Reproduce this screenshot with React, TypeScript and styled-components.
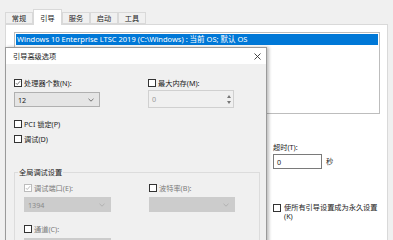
import React from 'react';
import styled, { createGlobalStyle } from 'styled-components';

const GlobalStyle = createGlobalStyle`
  body {
    margin: 0;
    background: #f0f0f0;
    font-family: "Noto Sans", "Noto Sans CJK SC", sans-serif;
    color: #1a1a1a;
  }
`;

type BoxProps = { $checked?: boolean; $disabled?: boolean };

const CheckBox: React.FC<BoxProps> = ({ $checked, $disabled }) => (
  <Box $disabled={$disabled}>
    {$checked && (
      <svg width="8" height="8" viewBox="0 0 8 8">
        <polyline points="1.2,4.2 3,6 6.8,1.6" fill="none" stroke={$disabled ? '#9a9a9a' : '#333'} strokeWidth="0.9" />
      </svg>
    )}
  </Box>
);

const Chevron: React.FC<{ $disabled?: boolean }> = ({ $disabled }) => (
  <svg width="6" height="4" viewBox="0 0 6 4">
    <polyline points="0.5,0.8 3,3.2 5.5,0.8" fill="none" stroke={$disabled ? '#aaa' : '#555'} strokeWidth="0.8" />
  </svg>
);

export default function App() {
  return (
    <>
      <GlobalStyle />
      <Window>
        <TabStrip>
          <Tab>常规</Tab>
          <Tab $active>引导</Tab>
          <Tab>服务</Tab>
          <Tab>启动</Tab>
          <Tab>工具</Tab>
        </TabStrip>
        <Panel>
          <ListBox>
            <SelectedRow>Windows 10 Enterprise LTSC 2019 (C:\Windows) : 当前 OS; 默认 OS</SelectedRow>
          </ListBox>
          <RightArea>
            <Label>超时(T):</Label>
            <TimeoutRow>
              <TextInput>0</TextInput>
              <Label>秒</Label>
            </TimeoutRow>
            <PermanentRow>
              <CheckBox />
              <WrapLabel>使所有引导设置成为永久设置<br />(K)</WrapLabel>
            </PermanentRow>
          </RightArea>
        </Panel>

        <Dialog>
          <TitleBar>
            <Title>引导高级选项</Title>
            <svg width="7" height="7" viewBox="0 0 7 7">
              <path d="M0.5 0.5 L6.5 6.5 M6.5 0.5 L0.5 6.5" stroke="#333" strokeWidth="0.9" />
            </svg>
          </TitleBar>
          <DialogBody>
            <TwoCols>
              <Field>
                <CheckRow>
                  <CheckBox $checked />
                  <Label>处理器个数(N):</Label>
                </CheckRow>
                <Select>
                  <span>12</span>
                  <Chevron />
                </Select>
              </Field>
              <Field>
                <CheckRow>
                  <CheckBox />
                  <Label>最大内存(M):</Label>
                </CheckRow>
                <Spin>
                  <span>0</span>
                  <SpinArrows>
                    <svg width="4" height="3" viewBox="0 0 4 3"><polygon points="0,3 2,0 4,3" fill="#777" /></svg>
                    <svg width="4" height="3" viewBox="0 0 4 3"><polygon points="0,0 2,3 4,0" fill="#777" /></svg>
                  </SpinArrows>
                </Spin>
              </Field>
            </TwoCols>
            <Options>
              <CheckRow>
                <CheckBox />
                <Label>PCI 锁定(P)</Label>
              </CheckRow>
              <CheckRow>
                <CheckBox />
                <Label>调试(D)</Label>
              </CheckRow>
            </Options>
            <GroupBox>
              <Legend>全局调试设置</Legend>
              <GroupCols>
                <Field>
                  <CheckRow>
                    <CheckBox $checked $disabled />
                    <Label $disabled>调试端口(E):</Label>
                  </CheckRow>
                  <Select $disabled $width={87}>
                    <span>1394</span>
                    <Chevron $disabled />
                  </Select>
                </Field>
                <Field>
                  <CheckRow>
                    <CheckBox />
                    <Label $disabled>波特率(B):</Label>
                  </CheckRow>
                  <Select $disabled>
                    <span />
                    <Chevron $disabled />
                  </Select>
                </Field>
              </GroupCols>
              <ChannelField>
                <CheckRow>
                  <CheckBox />
                  <Label $disabled>通道(C):</Label>
                </CheckRow>
                <Select $disabled $width={87}>
                  <span />
                </Select>
              </ChannelField>
            </GroupBox>
          </DialogBody>
        </Dialog>
      </Window>
    </>
  );
}

const Window = styled.div`
  position: relative;
  width: 393px;
  height: 240px;
  overflow: hidden;
  padding-top: 9px;
  box-sizing: border-box;
`;

const TabStrip = styled.div`
  display: flex;
  align-items: flex-end;
  padding-left: 5px;
  height: 15px;
  position: relative;
  z-index: 1;
`;

const Tab = styled.div<{ $active?: boolean }>`
  box-sizing: border-box;
  height: ${p => (p.$active ? '16px' : '12px')};
  width: ${p => (p.$active ? '29px' : '28px')};
  margin-bottom: ${p => (p.$active ? '-1px' : '0')};
  background: ${p => (p.$active ? '#fff' : '#f0f0f0')};
  border: 1px solid #d9d9d9;
  border-bottom: ${p => (p.$active ? 'none' : '1px solid #d9d9d9')};
  font-size: 7.2px;
  display: flex;
  align-items: center;
  justify-content: center;
  color: #222;
`;

const Panel = styled.div`
  margin-left: 5px;
  width: 383px;
  height: 230px;
  box-sizing: border-box;
  background: #fff;
  border: 1px solid #d9d9d9;
  padding: 7px 0 0 8px;
`;

const ListBox = styled.div`
  width: 366px;
  height: 82px;
  box-sizing: border-box;
  border: 1px solid #bdbdbd;
  padding: 1px;
`;

const SelectedRow = styled.div`
  height: 11px;
  background: #0078d7;
  color: #fff;
  font-size: 7.5px;
  line-height: 11px;
  padding-left: 1px;
  white-space: nowrap;
`;

const RightArea = styled.div`
  margin: 29px 0 0 259px;
  display: flex;
  flex-direction: column;
`;

const Label = styled.span<{ $disabled?: boolean }>`
  font-size: 7.2px;
  line-height: 9px;
  white-space: nowrap;
  color: ${p => (p.$disabled ? '#7a7a7a' : '#1a1a1a')};
`;

const TimeoutRow = styled.div`
  display: flex;
  align-items: center;
  gap: 4px;
  margin-top: 2px;
`;

const TextInput = styled.div`
  width: 49px;
  height: 15px;
  box-sizing: border-box;
  border: 1px solid #7a7a7a;
  background: #fff;
  font-size: 7.2px;
  padding-left: 3px;
  display: flex;
  align-items: center;
`;

const PermanentRow = styled.div`
  display: flex;
  align-items: flex-start;
  gap: 3px;
  margin-top: 35px;
`;

const WrapLabel = styled(Label)`
  margin-top: -1px;
`;

const Box = styled.div<{ $disabled?: boolean }>`
  width: 8px;
  height: 8px;
  box-sizing: border-box;
  border: 1px solid ${p => (p.$disabled ? '#bcbcbc' : '#333')};
  background: #fff;
  flex-shrink: 0;
  display: flex;
  align-items: center;
  justify-content: center;
  svg { display: block; }
`;

const Dialog = styled.div`
  position: absolute;
  left: 5px;
  top: 47px;
  width: 262px;
  height: 210px;
  box-sizing: border-box;
  border: 1px solid #9a9a9a;
  box-shadow: 2px 0 3px rgba(0, 0, 0, 0.25);
  background: #f0f0f0;
  display: flex;
  flex-direction: column;
`;

const TitleBar = styled.div`
  height: 16px;
  background: #fff;
  display: flex;
  align-items: center;
  justify-content: space-between;
  padding: 0 5px 0 7px;
  flex-shrink: 0;
`;

const Title = styled.span`
  font-size: 7.2px;
  color: #222;
`;

const DialogBody = styled.div`
  padding: 15px 0 0 8px;
  display: flex;
  flex-direction: column;
`;

const TwoCols = styled.div`
  display: grid;
  grid-template-columns: 134px 86px;
`;

const Field = styled.div`
  display: flex;
  flex-direction: column;
  gap: 5px;
`;

const CheckRow = styled.div`
  display: flex;
  align-items: center;
  gap: 2px;
  height: 8px;
`;

const Select = styled.div<{ $disabled?: boolean; $width?: number }>`
  width: ${p => p.$width ?? 86}px;
  height: 15px;
  box-sizing: border-box;
  border: 1px solid ${p => (p.$disabled ? '#cccccc' : '#b0b0b0')};
  background: ${p => (p.$disabled ? '#cccccc' : '#e5e5e5')};
  color: ${p => (p.$disabled ? '#8a8a8a' : '#1a1a1a')};
  font-size: 7.2px;
  display: flex;
  align-items: center;
  justify-content: space-between;
  padding: 0 5px 0 3px;
`;

const Spin = styled.div`
  width: 86px;
  height: 18px;
  margin-top: -2px;
  box-sizing: border-box;
  border: 1px solid #d0d0d0;
  background: #f0f0f0;
  color: #9a9a9a;
  font-size: 7.2px;
  display: flex;
  align-items: flex-start;
  justify-content: space-between;
  padding: 3px 2px 0 3px;
`;

const SpinArrows = styled.div`
  display: flex;
  flex-direction: column;
  gap: 3px;
  padding-top: 1px;
`;

const Options = styled.div`
  display: flex;
  flex-direction: column;
  gap: 7px;
  margin-top: 12px;
`;

const GroupBox = styled.fieldset`
  margin: 25px 0 0 0;
  width: 246px;
  box-sizing: border-box;
  border: 1px solid #dcdcdc;
  padding: 8px 0 0 9px;
  min-width: 0;
`;

const Legend = styled.legend`
  font-size: 7.2px;
  padding: 0 1px;
  margin-left: -6px;
  color: #222;
  line-height: 8px;
`;

const GroupCols = styled.div`
  display: grid;
  grid-template-columns: 125px 86px;
`;

const ChannelField = styled(Field)`
  margin-top: 13px;
`;
